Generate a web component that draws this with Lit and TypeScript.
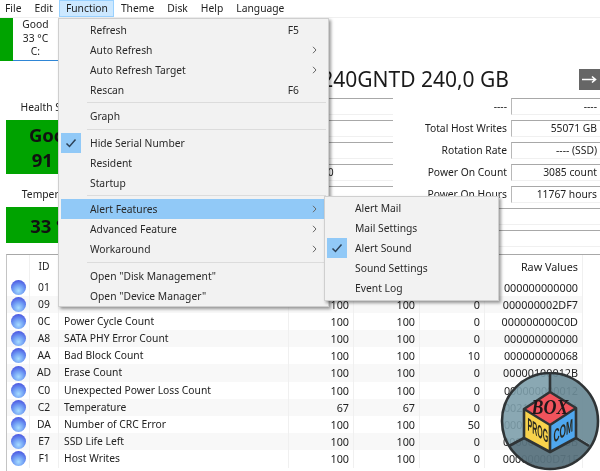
import { LitElement, html, css, svg, nothing } from "lit";
import { customElement } from "lit/decorators.js";

interface MenuEntry {
  label?: string;
  shortcut?: string;
  more?: boolean;
  checked?: boolean;
  active?: boolean;
}

const MENUS = ["File", "Edit", "Function", "Theme", "Disk", "Help", "Language"];

const FUNCTION_MENU: MenuEntry[] = [
  { label: "Refresh", shortcut: "F5" },
  { label: "Auto Refresh", more: true },
  { label: "Auto Refresh Target", more: true },
  { label: "Rescan", shortcut: "F6" },
  {},
  { label: "Graph" },
  {},
  { label: "Hide Serial Number", checked: true },
  { label: "Resident" },
  { label: "Startup" },
  {},
  { label: "Alert Features", more: true, active: true },
  { label: "Advanced Feature", more: true },
  { label: "Workaround", more: true },
  {},
  { label: 'Open "Disk Management"' },
  { label: 'Open "Device Manager"' },
];

const ALERT_MENU: MenuEntry[] = [
  { label: "Alert Mail" },
  { label: "Mail Settings" },
  { label: "Alert Sound", checked: true },
  { label: "Sound Settings" },
  { label: "Event Log" },
];

const FIELDS = [
  ["", "----", "----"],
  ["", "Total Host Writes", "55071 GB"],
  ["", "Rotation Rate", "---- (SSD)"],
  ["SATA/300 | 600", "Power On Count", "3085 count"],
  ["", "Power On Hours", "11767 hours"],
];

// cells that sit fully behind the open menu stay empty
const ATTRIBUTES = [
  ["01", "", "", "", "", "000000000000"],
  ["09", "", "100", "100", "0", "000000002DF7"],
  ["0C", "Power Cycle Count", "100", "100", "0", "000000000C0D"],
  ["A8", "SATA PHY Error Count", "100", "100", "0", "000000000000"],
  ["AA", "Bad Block Count", "100", "100", "10", "000000000068"],
  ["AD", "Erase Count", "100", "100", "0", "00000100012B"],
  ["C0", "Unexpected Power Loss Count", "100", "100", "0", "000000000012"],
  ["C2", "Temperature", "67", "67", "0", "002100000021"],
  ["DA", "Number of CRC Error", "100", "100", "50", "000000000000"],
  ["E7", "SSD Life Left", "100", "100", "0", "00000000005B"],
  ["F1", "Host Writes", "100", "100", "0", "00000000D71F"],
];

const check = html`<svg width="12" height="10" viewBox="0 0 12 10">
  <path d="M1.500 5.500 4.500 8.500 10.500 1.500" fill="none" stroke="#2c4258" stroke-width="1.500" />
</svg>`;

const chevron = html`<svg width="5" height="8" viewBox="0 0 5 8">
  <path d="M1 .8 4 4 1 7.200" fill="none" stroke="#666" stroke-width="1" />
</svg>`;

const logo = svg`
  <path d="M52 1A48 48 0 0 0 11 73L52 50Z" fill="#7d9fab" fill-opacity=".9" />
  <path d="M52 1A48 48 0 0 1 93 73L52 50Z" fill="#6c8b97" fill-opacity=".93" />
  <path d="M11 73A48 48 0 0 0 93 73L52 50Z" fill="#5a737e" fill-opacity=".95" />
  <circle cx="52" cy="49" r="48" fill="none" stroke="#2f3436" stroke-width="2.600" />
  <path d="M52 1V20M26 66 11 74M78 66 91 74" stroke="#2f3436" stroke-width="2.600" />
  <path d="M52 20 78 36 52 53 26 37Z" fill="#f1535c" />
  <path d="M26 37 52 53V80L26 66Z" fill="#f8d24c" />
  <path d="M78 36 52 53V80L78 66Z" fill="#4fa7ee" />
  <path d="M52 20 78 36V66L52 80 26 66V37ZM26 37 52 53 78 36M52 53V80" fill="none" stroke="#2f3436" stroke-width="2.600" stroke-linejoin="round" />
  <text class="box" transform="translate(52 42) scale(1.200 1.350)">BOX</text>
  <text class="face" transform="matrix(.5 .32 0 1.300 29.500 58)">PROG</text>
  <text class="face" transform="matrix(.6 -.37 0 1.300 55.500 71)">COM</text>
`;

@customElement("app-root")
export class AppRoot extends LitElement {
  static styles = css`
    :host {
      display: block;
      position: relative;
      width: 600px;
      height: 471px;
      overflow: hidden;
      background: #fff;
      color: #222;
      font: 10.3px/16px "Noto Sans", sans-serif;
      filter: blur(0.35px);
    }

    .menubar {
      display: flex;
      height: 17px;
      margin-left: -1.500px;
      border-bottom: 1px solid #f0f0f0;
    }

    .menubar span {
      padding: 0 6.500px;
      line-height: 17px;
    }

    .menubar span.open {
      background: #cce8ff;
      box-shadow: inset 0 0 0 1px #99d1ff;
    }

    .tabs {
      display: flex;
      height: 44px;
    }

    .tab-mark {
      width: 13px;
      height: 43px;
      background: #00a300;
    }

    .tab {
      width: 45px;
      height: 42px;
      border-bottom: 1.5px solid #2f86d6;
      text-align: center;
      line-height: 13.500px;
    }

    .summary {
      display: grid;
      grid-template-columns: 94px 1fr;
      height: 192px;
      padding-left: 6px;
    }

    .status {
      display: flex;
      flex-direction: column;
      padding-top: 37px;
      text-align: center;
    }

    .status .label {
      height: 21px;
    }

    .big {
      display: flex;
      flex-direction: column;
      justify-content: center;
      background: #00a300;
      color: #111;
      font-size: 18.500px;
      font-weight: 700;
      line-height: 25px;
    }

    .health {
      height: 54px;
      margin-bottom: 12px;
    }

    .temperature {
      height: 36px;
    }

    .details {
      padding-top: 7px;
    }

    .title-row {
      display: flex;
      justify-content: flex-end;
      align-items: center;
      gap: 70px;
      height: 21px;
      margin-bottom: 8px;
    }

    .title {
      font-size: 21px;
      line-height: 21px;
      color: #1a1a1a;
    }

    .next {
      width: 21px;
      height: 21px;
      background: #666;
    }

    .fields {
      display: grid;
      grid-template-columns: 100px 193px 118px 89px;
      grid-auto-rows: 17px;
      row-gap: 5px;
    }

    .field-label {
      padding-right: 4px;
      text-align: right;
      white-space: nowrap;
    }

    .field-value {
      border: 1px solid #f0f0f0;
      border-top-color: #a8a8a8;
      border-left-color: #b8b8b8;
      border-right: 0;
      padding-right: 3px;
      text-align: right;
      line-height: 15px;
      white-space: nowrap;
    }

    .field-value.center {
      padding: 0;
      text-align: center;
    }

    .wide {
      grid-column: 2 / 5;
    }

    .table {
      height: 217px;
      margin-left: 6px;
      border-top: 1px solid #a8a8a8;
      border-left: 1px solid #c4c4c4;
    }

    .row {
      display: grid;
      grid-template-columns: 23px 29px 230px 65px 66px 65px 98px;
      width: 576px;
      height: 17.200px;
      line-height: 17.200px;
    }

    .row.head {
      height: 23.500px;
      line-height: 23px;
    }

    .row:nth-child(odd):not(.head) {
      background: #f8f8f8;
    }

    .row > span {
      border-right: 1px solid #f0f0f0;
      white-space: nowrap;
      overflow: hidden;
    }

    .row > .id {
      text-align: center;
    }

    .row > .name {
      padding-left: 5px;
    }

    .row > .num {
      padding-right: 4px;
      font-size: 10.800px;
      text-align: right;
    }

    .row > .orb-cell {
      display: flex;
      align-items: center;
      justify-content: center;
    }

    .orb {
      flex: none;
      width: 15px;
      height: 15px;
      border-radius: 50%;
      background: radial-gradient(circle at 50% 72%, #a6dcff 0, #6f9cf4 42%, #4a55e0 82%);
    }

    .menu {
      position: absolute;
      box-sizing: border-box;
      padding: 0.5px 2px 0;
      background: #f2f2f2;
      border: 1px solid #cfcfcf;
      box-shadow: 2px 2px 3px rgba(0, 0, 0, 0.4);
    }

    .menu.main {
      left: 58px;
      top: 18px;
      width: 271px;
      height: 289px;
    }

    .menu.sub {
      left: 324px;
      top: 196px;
      width: 175px;
      height: 105px;
      padding-top: 1px;
    }

    .item {
      display: grid;
      grid-template-columns: 29px 1fr auto 14px;
      align-items: center;
      height: 20px;
      color: #2a2a2a;
    }

    .item.active {
      background: #91c9f7;
    }

    .tick {
      display: flex;
      align-items: center;
      justify-content: center;
      width: 20px;
      height: 20px;
    }

    .tick.on {
      background: #91c9f7;
    }

    .shortcut {
      padding-right: 13px;
    }

    .sep {
      height: 6.500px;
      margin-left: 26px;
      background: linear-gradient(#dcdcdc, #dcdcdc) center / 100% 1px no-repeat;
    }

    .sub .item {
      grid-template-columns: 28px 1fr;
    }

    .logo {
      position: absolute;
      left: 498px;
      top: 372px;
    }

    .logo .box {
      font: italic 700 15px "Liberation Serif", serif;
      fill: #20181a;
      text-anchor: middle;
    }

    .logo .face {
      font: 700 14px "Liberation Sans", sans-serif;
      fill: #2a2a20;
    }
  `;

  renderItem(entry: MenuEntry) {
    if (!entry.label) return html`<div class="sep"></div>`;
    return html`<div class="item ${entry.active ? "active" : ""}">
      <span class="tick ${entry.checked ? "on" : ""}">${entry.checked ? check : nothing}</span>
      <span>${entry.label}</span>
      <span class="shortcut">${entry.shortcut ?? nothing}</span>
      <span>${entry.more ? chevron : nothing}</span>
    </div>`;
  }

  render() {
    return html`
      <div class="menubar">
        ${MENUS.map((m) => html`<span class=${m === "Function" ? "open" : ""}>${m}</span>`)}
      </div>
      <div class="tabs">
        <div class="tab-mark"></div>
        <div class="tab">Good<br />33 °C<br />C:</div>
      </div>
      <div class="summary">
        <div class="status">
          <div class="label">Health Status</div>
          <div class="big health"><span>Good</span><span>91 %</span></div>
          <div class="label">Temperature</div>
          <div class="big temperature">33 °C</div>
        </div>
        <div class="details">
          <div class="title-row">
            <div class="title">240GNTD 240,0 GB</div>
            <div class="next">
              <svg width="21" height="21" viewBox="0 0 21 21">
                <path d="M3 10.500H16M13 7.500 16.500 10.500 13 13.500" fill="none" stroke="#fff" stroke-width="1.600" />
              </svg>
            </div>
          </div>
          <div class="fields">
            ${FIELDS.map(
              ([b, c, d]) => html`
                <div></div>
                <div class="field-value center">${b}</div>
                <div class="field-label">${c}</div>
                <div class="field-value">${d}</div>
              `,
            )}
            <div></div>
            <div class="field-value wide"></div>
            <div></div>
            <div class="field-value wide"></div>
          </div>
        </div>
      </div>
      <div class="table">
        <div class="row head">
          <span></span><span class="id">ID</span><span class="name"></span>
          <span class="num"></span><span class="num"></span>
          <span class="num"></span><span class="num">Raw Values</span>
        </div>
        ${ATTRIBUTES.map(
          ([id, name, current, worst, threshold, raw]) => html`<div class="row">
            <span class="orb-cell"><span class="orb"></span></span>
            <span class="id">${id}</span>
            <span class="name">${name}</span>
            <span class="num">${current}</span>
            <span class="num">${worst}</span>
            <span class="num">${threshold}</span>
            <span class="num">${raw}</span>
          </div>`,
        )}
      </div>
      <div class="menu main">${FUNCTION_MENU.map((e) => this.renderItem(e))}</div>
      <div class="menu sub">${ALERT_MENU.map((e) => this.renderItem(e))}</div>
      <svg class="logo" width="102" height="99" viewBox="0 0 102 99">${logo}</svg>
    `;
  }
}
